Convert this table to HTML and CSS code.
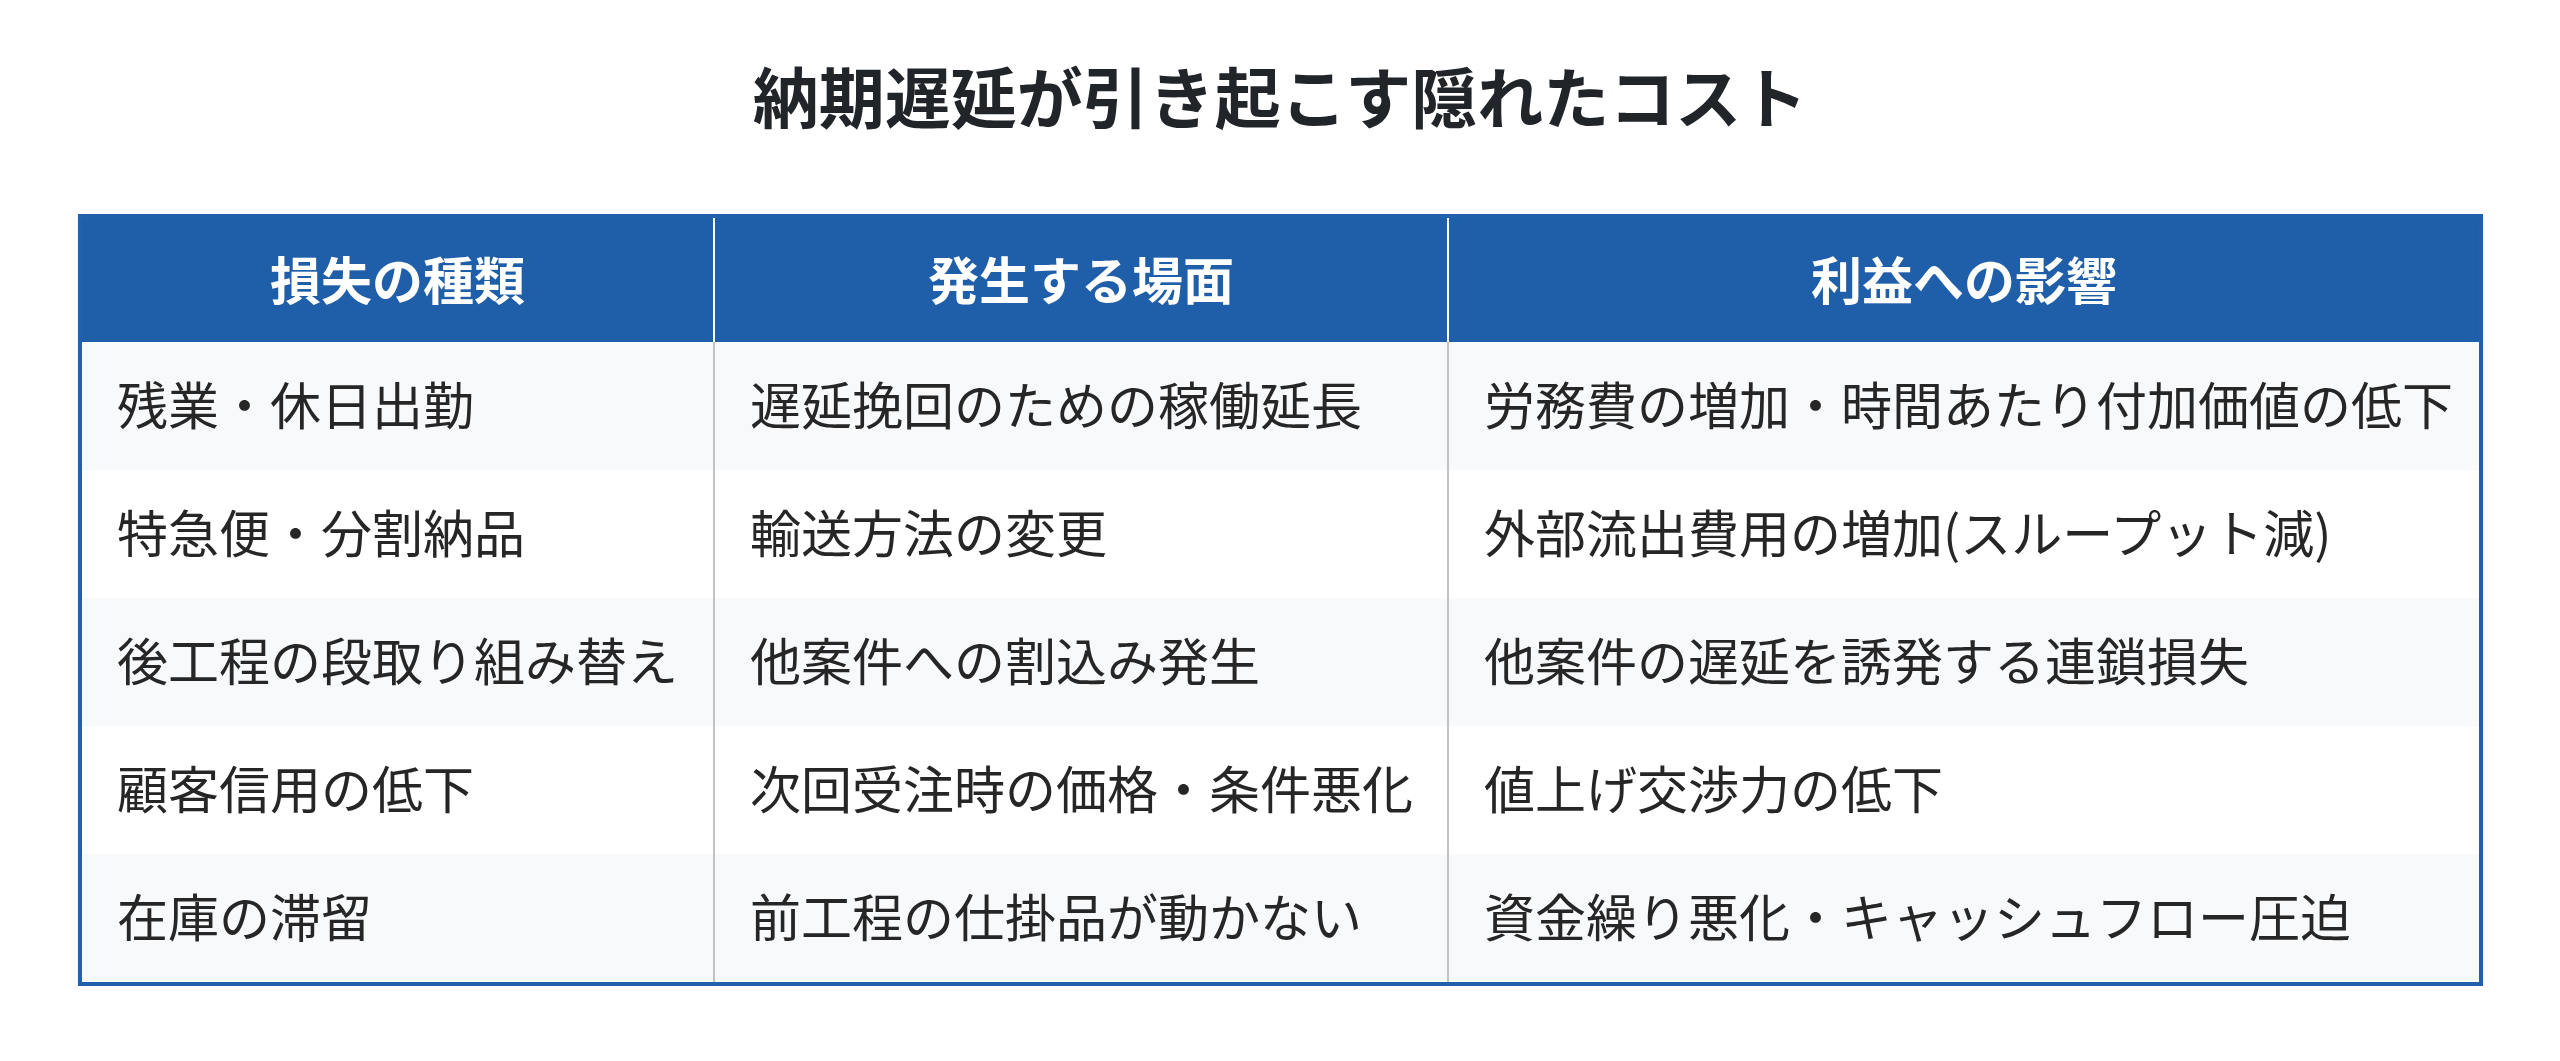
FILE: index.html
```html
<!DOCTYPE html>
<html lang="ja">
<head>
<meta charset="utf-8">
<title>納期遅延が引き起こす隠れたコスト</title>
<link rel="stylesheet" href="styles.css">
</head>
<body>
<main class="page">
  <h1 class="title">納期遅延が引き起こす隠れたコスト</h1>
  <table class="cost-table">
    <colgroup>
      <col class="col-type">
      <col class="col-scene">
      <col class="col-impact">
    </colgroup>
    <thead>
      <tr>
        <th>損失の種類</th>
        <th>発生する場面</th>
        <th>利益への影響</th>
      </tr>
    </thead>
    <tbody>
      <tr>
        <td>残業・休日出勤</td>
        <td>遅延挽回のための稼働延長</td>
        <td>労務費の増加・時間あたり付加価値の低下</td>
      </tr>
      <tr>
        <td>特急便・分割納品</td>
        <td>輸送方法の変更</td>
        <td>外部流出費用の増加(スループット減)</td>
      </tr>
      <tr>
        <td>後工程の段取り組み替え</td>
        <td>他案件への割込み発生</td>
        <td>他案件の遅延を誘発する連鎖損失</td>
      </tr>
      <tr>
        <td>顧客信用の低下</td>
        <td>次回受注時の価格・条件悪化</td>
        <td>値上げ交渉力の低下</td>
      </tr>
      <tr>
        <td>在庫の滞留</td>
        <td>前工程の仕掛品が動かない</td>
        <td>資金繰り悪化・キャッシュフロー圧迫</td>
      </tr>
    </tbody>
  </table>
</main>
</body>
</html>
```

FILE: styles.css
```css
html, body {
  margin: 0;
  padding: 0;
  background: #ffffff;
}

body {
  font-family: "Noto Sans CJK JP", "Noto Sans", sans-serif;
  color: #262626;
}

.page {
  padding-top: 46px;
}

.title {
  margin: 0 0 72px 0;
  font-size: 66px;
  line-height: 96px;
  font-weight: 700;
  text-align: center;
  color: #212529;
}

.cost-table {
  margin-left: 78px;
  width: 2405px;
  border-collapse: collapse;
  border: 4px solid #2160aa;
  table-layout: fixed;
  box-shadow: 0 1px 2px rgba(0, 0, 0, 0.12);
}

.col-type { width: 634px; }
.col-scene { width: 734px; }
.col-impact { width: auto; }

.cost-table th {
  height: 120px;
  padding: 0 36px 4px 36px;
  background: #1f5ea8;
  color: #ffffff;
  font-size: 51px;
  font-weight: 700;
  text-align: center;
  vertical-align: middle;
}

.cost-table th + th {
  border-left: 2px solid #ffffff;
}

.cost-table td {
  height: 122px;
  padding: 0 35px 6px 35px;
  font-size: 51px;
  font-weight: 400;
  text-align: left;
  vertical-align: middle;
  white-space: nowrap;
  color: #262626;
}

.cost-table td + td {
  border-left: 2px solid #c2c2c2;
}

.cost-table tbody tr:nth-child(odd) {
  background: #f8f9fb;
}

.cost-table tbody tr:nth-child(even) {
  background: #ffffff;
}
```
